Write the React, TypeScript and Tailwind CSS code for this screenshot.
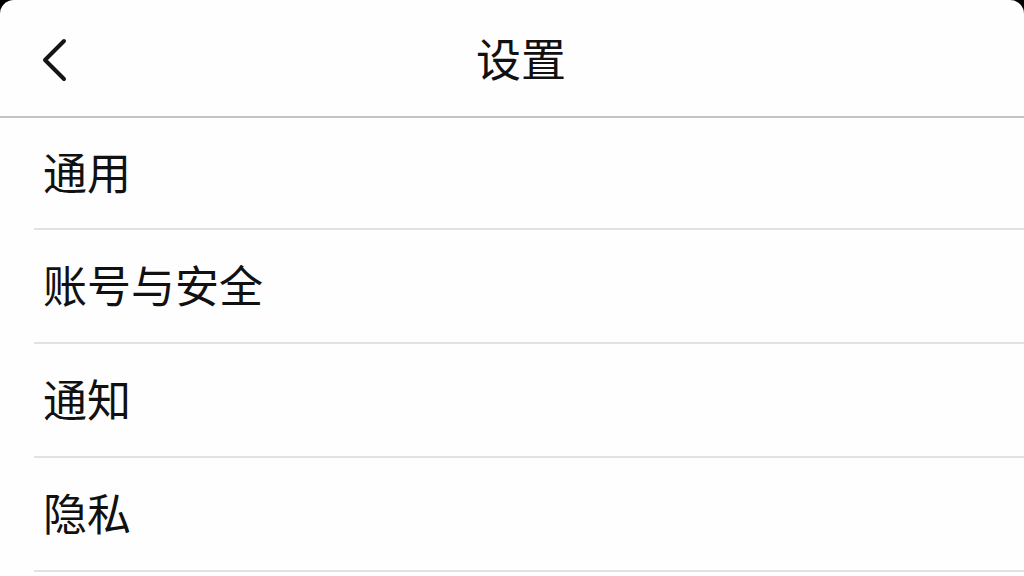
import React from "react";

const items = ["通用", "账号与安全", "通知", "隐私"];

export default function App() {
  return (
    <div className="w-[1024px] h-[576px] bg-black overflow-hidden" style={{ fontFamily: '"Noto Sans CJK SC", "Noto Sans", sans-serif' }}>
      <div className="w-full h-full bg-[#fefefe] rounded-t-[14px] overflow-hidden flex flex-col">
        <header className="relative h-[118px] shrink-0 flex items-center justify-center border-b-[2px] border-[#c4c4c4]">
          <button className="absolute left-[36px] top-[36px] w-[36px] h-[48px] flex items-center justify-center">
            <svg width="30" height="46" viewBox="0 0 30 46" fill="none">
              <path d="M25 4 L6 23 L25 42" stroke="#151515" strokeWidth="4" strokeLinecap="round" strokeLinejoin="round" />
            </svg>
          </button>
          <h1 className="pl-[18px] pb-[2px] text-[45px] leading-none text-[#111] font-normal">设置</h1>
        </header>
        <ul className="flex flex-col">
          {items.map((t, i) => (
            <li key={t} className={`ml-[34px] shrink-0 flex items-center border-b-[2px] border-[#e2e2e2] ${i === 0 ? "h-[112px]" : "h-[114px]"}`}>
              <span className="pl-[9px] pb-[4px] text-[44px] leading-none text-[#111]">{t}</span>
            </li>
          ))}
        </ul>
      </div>
    </div>
  );
}
